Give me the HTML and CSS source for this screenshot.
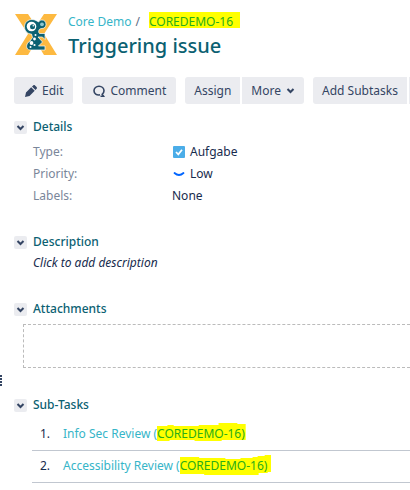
FILE: index.html
```html
<!DOCTYPE html>
<html lang="en">
<head>
<meta charset="utf-8">
<title>Triggering issue</title>
<link rel="stylesheet" href="styles.css">
</head>
<body>
<svg class="symbols" aria-hidden="true">
  <symbol id="chevron" viewBox="0 0 13 13"><path d="M3.500 5l3 3 3-3" fill="none" stroke="#344563" stroke-width="2"/></symbol>
</svg>
<header class="issue-header">
  <svg class="avatar" viewBox="0 0 44 42" aria-hidden="true">
    <path fill="#fdb940" d="M1 0h13l8 12L30 0h13L30 20l13 21H30l-8-13-8 13H1l13-21z"/>
    <path fill="#0b6172" stroke="#fff" stroke-width=".7" d="M18 5.500c3 0 5 1.500 6.500 2.500 1-1.500 2-2 3.500-2 2.500 0 4 2 4 4.300S30.500 14.500 28 14.500c-1.500 0-2.500.5-3 1.500-.5 1.500-.5 2.500.5 3.500h5.500v6l-2.500-2.500H24l4.500 5-4 4H31V36H16c-4 0-5-6 0-9l2.500-3.500-1-3.500c-4 0-7-3-7-7.300s3.500-7.200 7.500-7.200z"/>
    <circle cx="17.500" cy="12.500" r="4.800" fill="#fff"/><circle cx="18.500" cy="12.800" r="2.500" fill="#0b6172"/><circle cx="19.300" cy="11.800" r=".8" fill="#fff"/>
    <circle cx="28" cy="10.300" r="1.900" fill="#8dc6d0"/>
    <g fill="#fff"><circle cx="21.500" cy="21" r="1"/><circle cx="20.500" cy="25" r="1.400"/><circle cx="17.500" cy="29" r="1.900"/><circle cx="20.500" cy="31" r="1.100"/><circle cx="16.500" cy="33" r="1"/></g>
  </svg>
  <div class="heading">
    <nav class="breadcrumb" aria-label="Breadcrumb">
      <a href="#project">Core Demo</a><span class="slash">/</span>
      <a class="marked" href="#issue"><svg class="marker" viewBox="0 0 92 16" preserveAspectRatio="none" aria-hidden="true"><path d="M0 0h92v16H0z"/></svg><span>COREDEMO-16</span></a>
    </nav>
    <h1>Triggering issue</h1>
  </div>
</header>
<div class="toolbar">
  <button class="btn" type="button"><svg class="icon" viewBox="0 0 12 12" aria-hidden="true"><path fill="#344563" d="M0 12l1-4.500L6.200 2.300l3.500 3.500L4.500 11zM7 1.500L8.200.4c.6-.5 1.200-.5 1.800 0l1.600 1.600c.5.6.5 1.200 0 1.800L10.500 5z"/></svg>Edit</button>
  <button class="btn" type="button"><svg class="icon" viewBox="0 0 12 12" aria-hidden="true"><path fill="none" stroke="#344563" stroke-width="1.600" d="M7 9.800C3.500 10.500 1 8.500 1 5.800 1 3.200 3.200 1.200 6 1.200s5 2 5 4.600c0 1.400-.7 2.700-1.800 3.500l1.300 1.900H7.500"/></svg>Comment</button>
  <div class="group">
    <button class="btn" type="button">Assign</button>
    <button class="btn" type="button">More<svg class="caret" viewBox="2 2 9 9" aria-hidden="true"><path d="M3.500 5l3 3 3-3" fill="none" stroke="#344563" stroke-width="2"/></svg></button>
  </div>
  <div class="group">
    <button class="btn" type="button">Add Subtasks</button>
    <button class="btn" type="button" aria-label="More transitions"></button>
  </div>
</div>
<main>
  <section class="module details">
    <h2><button class="toggle" type="button" aria-label="Toggle Details"><svg aria-hidden="true"><use href="#chevron"/></svg></button>Details</h2>
    <dl class="fields">
      <dt>Type:</dt>
      <dd><svg class="field-icon" viewBox="0 0 12 12" aria-hidden="true"><rect width="12" height="12" rx="1" fill="#4bade8"/><path d="M3 6l2.300 2.400L9 3.800" fill="none" stroke="#fff" stroke-width="1.700"/></svg>Aufgabe</dd>
      <dt>Priority:</dt>
      <dd><svg class="field-icon" viewBox="0 0 12 12" aria-hidden="true"><path d="M1.500 5Q6 9 10.500 5" fill="none" stroke="#0065ff" stroke-width="1.800" stroke-linecap="round"/></svg>Low</dd>
      <dt>Labels:</dt>
      <dd>None</dd>
    </dl>
  </section>
  <section class="module description">
    <h2><button class="toggle" type="button" aria-label="Toggle Description"><svg aria-hidden="true"><use href="#chevron"/></svg></button>Description</h2>
    <p class="placeholder">Click to add description</p>
  </section>
  <section class="module attachments">
    <h2><button class="toggle" type="button" aria-label="Toggle Attachments"><svg aria-hidden="true"><use href="#chevron"/></svg></button>Attachments</h2>
    <div class="dropzone"></div>
  </section>
  <section class="module">
    <h2><button class="toggle" type="button" aria-label="Toggle Sub-Tasks"><svg aria-hidden="true"><use href="#chevron"/></svg></button>Sub-Tasks</h2>
    <ol class="subtasks">
      <li><span class="num">1.</span><a href="#sub1">Info Sec Review (<span class="marked"><svg class="marker" viewBox="0 0 86 20" preserveAspectRatio="none" aria-hidden="true"><path d="M0 3h10V2h6v1h24V2h19V0h18v1h8v16H62v1H36v-1H12v1H0z"/></svg><span>COREDEMO-16)</span></span></a></li>
      <li><span class="num">2.</span><a href="#sub2">Accessibility Review (<span class="marked wide"><svg class="marker" viewBox="0 0 91 20" preserveAspectRatio="none" aria-hidden="true"><path d="M0 2h19v1h26v1h15V3h12V2h5V1h7V0h7v17h-4v1h-9v2H24v-1H0z"/></svg><span>COREDEMO-16)</span></span></a></li>
    </ol>
  </section>
  <span class="grip" aria-hidden="true"></span>
</main>
</body>
</html>
```
FILE: styles.css
```css
* { box-sizing: border-box; }
body {
  margin: 0;
  padding: 14px 0 0 14px;
  background: #fff;
  color: #172b4d;
  font: 12px/18px "Noto Sans", "Open Sans", sans-serif;
}
h1, h2, p, dl, dd, ol { margin: 0; padding: 0; }
a { color: #36b5c8; text-decoration: none; }
.symbols { position: absolute; width: 0; height: 0; }
.issue-header { display: flex; gap: 10px; }
.avatar { flex: none; width: 44px; height: 42px; }
.breadcrumb { display: flex; line-height: 16px; }
.slash { margin: 0 9px 0 4px; color: #5e6c84; }
h1 { color: #0b6172; font-size: 20px; line-height: 32px; font-weight: 500; }
.marked { position: relative; color: #29ad18; }
.marked > span { position: relative; }
.marker { position: absolute; left: 0; top: -2px; width: calc(100% + 2px); height: 20px; fill: #ff0; }
.wide .marker { width: calc(100% + 4px); }
.breadcrumb .marker { width: calc(100% + 7px); height: 16px; }
.toolbar { display: flex; gap: 9px; margin-top: 15px; overflow: hidden; white-space: nowrap; }
.group { display: flex; gap: 2px; }
.btn {
  display: flex;
  flex: none;
  align-items: center;
  height: 27px;
  padding: 0 10px;
  border: 0;
  border-radius: 3px;
  background: #ebecf0;
  color: #344563;
  font: inherit;
}
.group .btn { padding: 0 9px; }
.group .btn:first-child { border-radius: 3px 0 0 3px; }
.group .btn:last-child { border-radius: 0 3px 3px 0; }
.icon { width: 12px; height: 12px; margin: 0 5px 0 1px; }
.caret { width: 9px; height: 9px; margin-left: 5px; }
.module { margin-bottom: 22px; }
.details { margin-top: 14px; margin-bottom: 26px; }
h2 { display: flex; align-items: center; gap: 6px; color: #0b6172; font-size: 12px; line-height: 18px; font-weight: 500; }
.toggle { display: flex; width: 13px; height: 13px; padding: 0; border: 0; border-radius: 2px; background: #ebecf0; }
.toggle svg { width: 13px; height: 13px; }
.fields { display: grid; grid-template-columns: 139px 1fr; margin: 5px 0 0 19px; line-height: 22px; }
.fields dt { color: #7a869a; }
.fields dd { display: flex; align-items: center; gap: 5px; }
.field-icon { width: 12px; height: 12px; margin-left: 1px; }
.placeholder { margin: 3px 0 0 19px; font-style: italic; }
.description { margin-bottom: 28px; }
.dropzone { height: 44px; margin: 6px 0 0 9px; border: 1px dashed #bbb; border-right: 0; }
.attachments { margin-bottom: 28px; }
.subtasks { margin: 5px 0 0 18px; list-style: none; }
.subtasks li { display: flex; height: 32px; padding-top: 6px; border-bottom: 1px solid #c1c7d0; }
.num { width: 31px; padding-left: 8px; }
.grip { position: absolute; left: 0; top: 375px; width: 2px; height: 12px; background: repeating-linear-gradient(#344563 0 2px, #fff 2px 3px); }
```
